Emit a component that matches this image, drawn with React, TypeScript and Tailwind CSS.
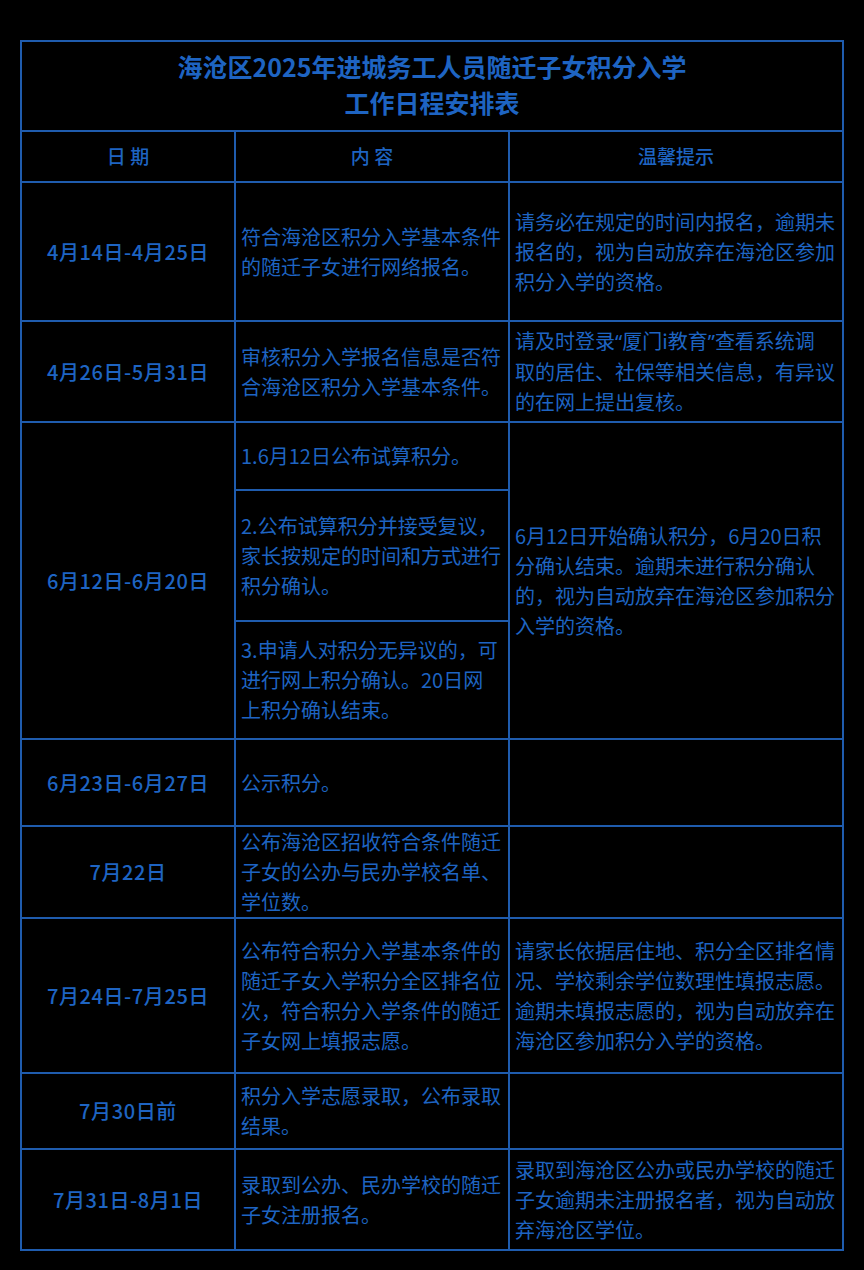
const font = {
  fontFamily: '"Noto Sans CJK SC", "Noto Sans", sans-serif',
};

type Row = {
  date: string;
  content: React.ReactNode[];
  tip: React.ReactNode[];
};

// narrow Latin quotes, the CJK ones are full width
const Q = ({ c }: { c: string }) => (
  <span style={{ fontFamily: '"Noto Sans", sans-serif' }}>{c}</span>
);

const rows: Row[] = [
  {
    date: "4月14日-4月25日",
    content: ["符合海沧区积分入学基本条件", "的随迁子女进行网络报名。"],
    tip: [
      "请务必在规定的时间内报名，逾期未",
      "报名的，视为自动放弃在海沧区参加",
      "积分入学的资格。",
    ],
  },
  {
    date: "4月26日-5月31日",
    content: ["审核积分入学报名信息是否符", "合海沧区积分入学基本条件。"],
    tip: [
      <>
        请及时登录<Q c="“" />厦门i教育<Q c="”" />查看系统调
      </>,
      "取的居住、社保等相关信息，有异议",
      "的在网上提出复核。",
    ],
  },
];

const laterRows: Row[] = [
  { date: "6月23日-6月27日", content: ["公示积分。"], tip: [] },
  {
    date: "7月22日",
    content: ["公布海沧区招收符合条件随迁", "子女的公办与民办学校名单、", "学位数。"],
    tip: [],
  },
  {
    date: "7月24日-7月25日",
    content: [
      "公布符合积分入学基本条件的",
      "随迁子女入学积分全区排名位",
      "次，符合积分入学条件的随迁",
      "子女网上填报志愿。",
    ],
    tip: [
      "请家长依据居住地、积分全区排名情",
      "况、学校剩余学位数理性填报志愿。",
      "逾期未填报志愿的，视为自动放弃在",
      "海沧区参加积分入学的资格。",
    ],
  },
  { date: "7月30日前", content: ["积分入学志愿录取，公布录取", "结果。"], tip: [] },
  {
    date: "7月31日-8月1日",
    content: ["录取到公办、民办学校的随迁", "子女注册报名。"],
    tip: [
      "录取到海沧区公办或民办学校的随迁",
      "子女逾期未注册报名者，视为自动放",
      "弃海沧区学位。",
    ],
  },
];

function Lines({ lines }: { lines: React.ReactNode[] }) {
  return (
    <div className="text-[20px] leading-[30px] whitespace-nowrap">
      {lines.map((l, i) => (
        <div key={i}>{l}</div>
      ))}
    </div>
  );
}

function DateCell({ text, span }: { text: string; span?: string }) {
  return (
    <div
      className={`flex items-center justify-center bg-black text-[20px] font-medium tracking-[0.6px] ${span ?? ""}`}
    >
      {text}
    </div>
  );
}

function TextCell({ lines, span }: { lines: React.ReactNode[]; span?: string }) {
  return (
    <div className={`flex items-center bg-black px-[5px] ${span ?? ""}`}>
      <Lines lines={lines} />
    </div>
  );
}

export default function App() {
  return (
    <div className="min-h-[1270px] w-full bg-black pt-[40px] pl-[20px]" style={font}>
      <div className="grid w-[824px] grid-cols-[212px_272px_332px] grid-rows-[88px_49px_137px_99px_66px_129px_116px_85px_90px_153px_74px_99px] gap-[2px] bg-[#1f5cae] p-[2px] text-[#1e64c2]">
        <div className="col-span-3 flex flex-col items-center justify-center bg-black pb-[5px] text-[25px] font-bold leading-[36px]">
          <div>海沧区2025年进城务工人员随迁子女积分入学</div>
          <div>工作日程安排表</div>
        </div>

        <div className="flex items-center justify-center bg-black text-[19px] font-medium">日 期</div>
        <div className="flex items-center justify-center bg-black text-[19px] font-medium">内 容</div>
        <div className="flex items-center justify-center bg-black text-[19px] font-medium">温馨提示</div>

        {rows.map((r) => (
          <>
            <DateCell key={r.date + "d"} text={r.date} />
            <TextCell key={r.date + "c"} lines={r.content} />
            <TextCell key={r.date + "t"} lines={r.tip} />
          </>
        ))}

        <DateCell text="6月12日-6月20日" span="row-span-3" />
        <TextCell lines={["1.6月12日公布试算积分。"]} />
        <TextCell
          span="row-span-3"
          lines={[
            "6月12日开始确认积分，6月20日积",
            "分确认结束。逾期未进行积分确认",
            "的，视为自动放弃在海沧区参加积分",
            "入学的资格。",
          ]}
        />
        <TextCell
          lines={["2.公布试算积分并接受复议，", "家长按规定的时间和方式进行", "积分确认。"]}
        />
        <TextCell
          lines={["3.申请人对积分无异议的，可", "进行网上积分确认。20日网", "上积分确认结束。"]}
        />

        {laterRows.map((r) => (
          <>
            <DateCell key={r.date + "d"} text={r.date} />
            <TextCell key={r.date + "c"} lines={r.content} />
            <TextCell key={r.date + "t"} lines={r.tip} />
          </>
        ))}
      </div>
    </div>
  );
}
